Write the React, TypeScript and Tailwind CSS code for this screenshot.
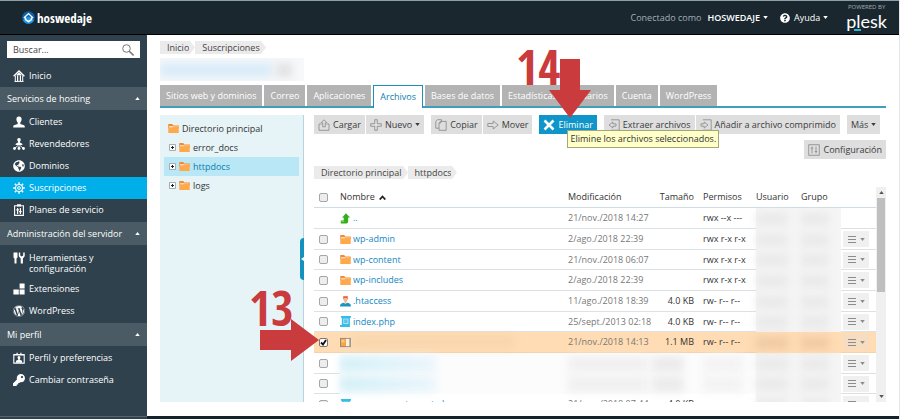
import type { ReactNode } from "react";
import { FaGlobeAmericas, FaKey, FaQuestionCircle, FaWordpress } from "react-icons/fa";

function Caret({ up = false }: { up?: boolean }) {
  return (
    <svg viewBox="0 0 6 4" className="h-[3px] w-[5px] shrink-0" fill="currentColor">
      <path d={up ? "M0 4 3 0l3 4z" : "M0 0h6L3 4z"} />
    </svg>
  );
}

function Icon({ children, className = "size-3" }: { children: ReactNode; className?: string }) {
  return (
    <svg viewBox="0 0 12 12" className={`${className} shrink-0`} fill="currentColor">
      {children}
    </svg>
  );
}

const line = { fill: "none", stroke: "currentColor" };

const bust =
  "M6 .5C4.2.5 3.3 1.8 3.4 3.5c.1 1.4.7 2.4 1.3 3v1.4L1 9.3c-.6.3-.8.8-.8 2.2h11.6c0-1.4-.2-1.9-.8-2.2L7.3 7.9V6.5c.6-.6 1.2-1.600 1.300-3C8.7 1.800 7.800.5 6 .5z";

function HomeIcon() {
  return (
    <Icon>
      <path {...line} strokeWidth="1.3" d="M.6 6.2 6 1l5.4 5.2" />
      <path {...line} d="M2.3 5.5v6M9.7 5.5v6M1.5 11.4h9" />
      <path d="M4 5.5h1.200V11H4zM6.800 5.500H8V11H6.800zM3 5.200 6 2.200l3 3z" />
    </Icon>
  );
}

function UserIcon() {
  return (
    <Icon>
      <path d={bust} />
    </Icon>
  );
}

function ResellerIcon() {
  return (
    <Icon>
      <path d="M6 0C4.800 0 4.200.9 4.300 2c0 .8.400 1.400.8 1.800v.8l-2 .9c-.4.2-.5.6-.5 1.500h6.800c0-.9-.1-1.300-.5-1.500l-2-.9v-.8c.4-.4.8-1 .8-1.800C7.800.9 7.200 0 6 0z" />
      <path {...line} strokeWidth=".9" d="M6 7v3M5 7.500 2 10M7 7.500 10 10" />
      <circle cx="1.5" cy="10.5" r="1.4" />
      <circle cx="6" cy="10.5" r="1.4" />
      <circle cx="10.5" cy="10.5" r="1.4" />
    </Icon>
  );
}

function GearIcon() {
  return (
    <Icon>
      <circle {...line} cx="6" cy="6" r="3.5" strokeWidth="1.1" />
      <circle {...line} cx="6" cy="6" r="1.4" />
      <path
        {...line}
        strokeWidth="1.5"
        d="M6 .2v2M6 9.8v2M.2 6h2M9.8 6h2M1.9 1.9l1.4 1.4M8.7 8.7l1.4 1.4M1.9 10.1l1.4-1.4M8.7 3.3l1.4-1.4"
      />
    </Icon>
  );
}

function PlanIcon() {
  return (
    <Icon>
      <path {...line} strokeWidth="1.1" d="M1.600 1.800h8.800v9.600H1.600z" />
      <path d="M4 .2h4v2.400H4zM4 4h1.200v6H4zM6.800 4H8v6H6.800zM3.300 5.200h2.600v1.200H3.300zM6.100 7h2.600v1.200H6.100z" />
    </Icon>
  );
}

function ToolsIcon() {
  return (
    <Icon>
      <path d="M.5.5h4v5l-1 1v5h-2v-5l-1-1z" />
      <path d="M5.800.5h1.400v3l1.500 1 1.500-1v-3h1.500v3.700L9.900 6.400v5.100H7.700V6.400L5.800 4.200z" />
    </Icon>
  );
}

function ExtensionsIcon() {
  return (
    <Icon>
      <path d="M6.600.6h5v5h-5zM.4 6.400h5.400v5H.4zM6.600 6.400h5v5h-5z" />
    </Icon>
  );
}

function BadgeIcon() {
  return (
    <Icon>
      <path {...line} strokeWidth="1.1" d="M.8 2.500h10.400v8.600H.8z" />
      <path d="M3.500.8h1.200v2H3.500zM7.300.8h1.200v2H7.300zM1 2.300h10v1.200H1z" />
      <path d="M6 4C5 4 4.500 4.800 4.600 5.700c0 .6.300 1 .6 1.300v.7L3 8.700v2h6v-2l-2.200-1V7c.3-.3.6-.7.6-1.300C7.500 4.800 7 4 6 4z" />
    </Icon>
  );
}

function FolderIcon() {
  return (
    <Icon className="h-[11px] w-[11px]">
      <path fill="#f58a2c" d="M.3 1h4.400l1 1.600h6v3H.3z" />
      <path fill="#fff" d="M1.300 3.600h9.600v2H1.300z" />
      <path fill="#ffa94d" d="M.3 4.600h4.500l1-1h5.900V11H.3z" />
    </Icon>
  );
}

function UpIcon() {
  return (
    <Icon className="h-[11px] w-[11px]">
      <path fill="#35b01b" d="M6.500.3 11 4.800H8.900v4.500c0 1.400-1 2.200-2.200 2.200H1l-.2-3.400H4V4.800H2.200z" />
      <path fill="#7ed957" d="M1.800 8.900h2.800v1H1.900z" />
    </Icon>
  );
}

function HtaccessIcon() {
  return (
    <Icon className="h-[11px] w-[11px]">
      <path fill="#e8623d" d="M3.500.2h5v3.500h-5z" />
      <path fill="#f7b48d" d="M4 2.200h4v3L6.900 6.500v1H5.100v-1L4 5.200z" />
      <path fill="#1d93c4" d="M0 11.500c0-2.600 1-3.600 4-4.200l2 1.200 2-1.200c3 .6 4 1.600 4 4.200z" />
    </Icon>
  );
}

function PhpIcon() {
  return (
    <Icon className="h-[11px] w-[11px]">
      <path fill="#35bce8" d="M1 0h11v2h-1.200v10H0V9.700h2V2H1z" />
      <path fill="#9fe3f7" d="M3.500 2.800h5.800v5.900H3.500z" />
      <path fill="#1fa0d0" d="M4.500 4h3.600v1H4.500zM4.500 6h3.600v1H4.500z" />
    </Icon>
  );
}

function ArchiveIcon() {
  return (
    <Icon className="h-[11px] w-[11px]">
      <path fill="#8c8a8c" d="M0 1h12v10H0z" />
      <path fill="#fff3e2" d="M6.500 2h3.700v8H6.500z" />
      <path fill="#f9a63c" d="M1 2h5.500v8H1z" />
      <path fill="#ffc477" d="M1.500 3h3.500v3H1.500z" />
    </Icon>
  );
}

function UploadIcon() {
  return (
    <Icon>
      <path {...line} strokeWidth=".8" d="M3.500 5H1v6.300h10V5H8.500M6 .8l3 3H7.300v4H4.700v-4H3z" />
    </Icon>
  );
}

function PlusIcon() {
  return (
    <Icon>
      <path {...line} strokeWidth=".8" d="M4.700.7h2.600v4h4v2.600h-4v4H4.700v-4h-4V4.700h4z" />
    </Icon>
  );
}

function CopyIcon() {
  return (
    <Icon>
      <path {...line} strokeWidth=".8" d="M4 9.200H.8V2.300L2.500.7h4v1.500M4 4l1.800-1.600h5.400v8.900H4zM5.800 2.400V4H4" />
    </Icon>
  );
}

function MoveIcon() {
  return (
    <Icon>
      <path {...line} strokeWidth=".8" d="M.8 4.500h5.400V2l5 4-5 4V7.500H.8z" />
    </Icon>
  );
}

function ExtractIcon() {
  return (
    <Icon>
      <path {...line} strokeWidth=".8" d="M3 .8h8.200v10.400H3M8 4.800H4.800V3L1 6l3.800 3V7.200H8z" />
    </Icon>
  );
}

function CompressIcon() {
  return (
    <Icon>
      <path {...line} strokeWidth=".8" d="M3 .8h8.200v10.400H3M1 4.800h3.200V3L8 6 4.200 9V7.200H1z" />
    </Icon>
  );
}

function SettingsIcon() {
  return (
    <Icon>
      <path {...line} strokeWidth=".8" d="M.7.7h10.600v10.600H.7zM4 2.500v7M8 2.500v7M2.800 4.200h2.400M6.800 7.500h2.400" />
    </Icon>
  );
}

const menu = [
  {
    title: "Servicios de hosting",
    items: [
      { label: "Clientes", icon: <UserIcon /> },
      { label: "Revendedores", icon: <ResellerIcon /> },
      { label: "Dominios", icon: <FaGlobeAmericas className="size-3 shrink-0" /> },
      { label: "Suscripciones", icon: <GearIcon />, active: true },
      { label: "Planes de servicio", icon: <PlanIcon /> },
    ],
  },
  {
    title: "Administración del servidor",
    items: [
      { label: "Herramientas y configuración", icon: <ToolsIcon />, tall: true },
      { label: "Extensiones", icon: <ExtensionsIcon /> },
      { label: "WordPress", icon: <FaWordpress className="size-3 shrink-0" /> },
    ],
  },
  {
    title: "Mi perfil",
    items: [
      { label: "Perfil y preferencias", icon: <BadgeIcon /> },
      { label: "Cambiar contraseña", icon: <FaKey className="size-3 shrink-0" /> },
    ],
  },
];

const tabs = [
  "Sitios web y dominios",
  "Correo",
  "Aplicaciones",
  "Archivos",
  "Bases de datos",
  "Estadísticas",
  "Usuarios",
  "Cuenta",
  "WordPress",
];

type Row = {
  name: string;
  icon: ReactNode;
  date: string;
  size?: string;
  perms: string;
  parent?: boolean;
  selected?: boolean;
  hidden?: boolean;
};

const rows: Row[] = [
  { name: "..", icon: <UpIcon />, date: "21/nov./2018 14:27", perms: "rwx --x ---", parent: true },
  { name: "wp-admin", icon: <FolderIcon />, date: "2/ago./2018 22:39", perms: "rwx r-x r-x" },
  { name: "wp-content", icon: <FolderIcon />, date: "21/nov./2018 06:07", perms: "rwx r-x r-x" },
  { name: "wp-includes", icon: <FolderIcon />, date: "2/ago./2018 22:39", perms: "rwx r-x r-x" },
  { name: ".htaccess", icon: <HtaccessIcon />, date: "11/ago./2018 18:39", size: "4.0 KB", perms: "rw- r-- r--" },
  { name: "index.php", icon: <PhpIcon />, date: "25/sept./2013 02:18", size: "4.0 KB", perms: "rw- r-- r--" },
  { name: "", icon: <ArchiveIcon />, date: "21/nov./2018 14:13", size: "1.1 MB", perms: "rw- r-- r--", selected: true },
  { name: "", icon: null, date: "", perms: "", hidden: true },
  { name: "", icon: null, date: "", perms: "", hidden: true },
  { name: "wp-comments-post.php", icon: <PhpIcon />, date: "21/nov./2018 07:44", size: "4.0 KB", perms: "rw- r-- r--" },
];

function Header() {
  return (
    <header className="flex h-[35px] shrink-0 items-center justify-between border-y border-t-[#8aa0a6] border-b-black bg-[#1a272f] pr-3 pl-[22px] text-white">
      <a href="#" className="flex items-center gap-0.5">
        <svg viewBox="0 0 14 14" className="size-[13px]">
          <circle cx="7" cy="7" r="6.8" fill="#0a62ad" />
          <path d="M1 10A6.800 6.800 0 0 0 13 10L7 6z" fill="#1f9be8" />
          <path d="M2 7.500 7 2.800l5 4.700M3.800 7v2.300L7 11.500l3.200-2.200V7" fill="none" stroke="#fff" strokeWidth="1.5" />
        </svg>
        <span className="font-['Open_Sans_Condensed','Open_Sans',sans-serif] text-[13px] leading-4 font-bold">
          hoswedaje
        </span>
      </a>
      <div className="flex items-center">
        <span className="mr-1.5 text-[#a3aeb4]">Conectado como</span>
        <button className="flex items-center gap-[3px] font-semibold">
          HOSWEDAJE <Caret />
        </button>
        <button className="ml-3 flex items-center gap-[3px]">
          <FaQuestionCircle className="mr-px size-2.5" /> Ayuda <Caret />
        </button>
        <a href="#" className="ml-[18px] flex flex-col items-center">
          <span className="text-[6px] leading-[7px] text-[#a3aeb4]">POWERED BY</span>
          <span className="flex font-['Lato',sans-serif] text-[18px] leading-5">
            p
            <span className="relative">
              l<i className="absolute -left-0.5 bottom-0 block h-0.5 w-[7px] bg-[#29b6d8]" />
            </span>
            esk
          </span>
        </a>
      </div>
    </header>
  );
}

function Sidebar() {
  return (
    <nav className="w-[147px] shrink-0 bg-[#2f414d] text-white">
      <label className="mx-[7px] mt-1.5 mb-[7px] flex h-[17px] items-center bg-white px-1.5">
        <input
          type="text"
          aria-label="Buscar"
          placeholder="Buscar..."
          className="w-0 flex-1 outline-none placeholder:text-[#444]"
        />
        <svg viewBox="0 0 12 12" className="size-3 text-[#777]" fill="none" stroke="currentColor">
          <circle cx="4.5" cy="4.5" r="3.8" />
          <path d="m7.3 7.3 4.3 4.2" strokeWidth="1.5" />
        </svg>
      </label>
      <a href="#" className="flex h-[22px] items-center gap-1 pl-[13px]">
        <HomeIcon /> Inicio
      </a>
      {menu.map((group) => (
        <section key={group.title}>
          <button className="flex h-[23px] w-full items-center justify-between bg-[#4a5b65] px-[7px]">
            {group.title} <Caret up />
          </button>
          <ul className="py-px">
            {group.items.map((item) => (
              <li key={item.label}>
                <a
                  href="#"
                  className={`flex gap-1 pl-[13px] ${item.tall ? "h-8 pt-1.5 pr-9 leading-[11px]" : "h-[22px] items-center"} ${item.active ? "bg-[#00aeea]" : ""}`}
                >
                  {item.icon} {item.label}
                </a>
              </li>
            ))}
          </ul>
        </section>
      ))}
    </nav>
  );
}

function Crumbs({ items }: { items: string[] }) {
  return (
    <div className="flex shrink-0">
      {items.map((item) => (
        <a key={item} href="#" className="flex h-[13px] items-center text-[#444]">
          <span className="flex h-full items-center bg-[#ebebeb] pl-[7px]">{item}</span>
          <svg viewBox="0 0 6 13" className="h-[13px] w-1.5 fill-[#ebebeb]">
            <path d="M0 0h1l5 6.500L1 13H0z" />
          </svg>
        </a>
      ))}
    </div>
  );
}

function Tool({ icon, label, caret = false, primary = false }: { icon?: ReactNode; label: string; caret?: boolean; primary?: boolean }) {
  return (
    <button
      className={`flex h-[19px] items-center gap-[3px] px-1 whitespace-nowrap ${primary ? "bg-[#1095ca] text-white" : "bg-[#dedede] text-[#3c3c3c]"}`}
    >
      {icon && <span className={primary ? "" : "text-[#888]"}>{icon}</span>}
      {label}
      {caret && <Caret />}
    </button>
  );
}

function Toolbar() {
  return (
    <div className="flex shrink-0 flex-wrap justify-end gap-y-[6px]">
      <div className="flex w-full gap-[7px]">
        <div className="flex gap-px">
          <Tool icon={<UploadIcon />} label="Cargar" />
          <Tool icon={<PlusIcon />} label="Nuevo" caret />
        </div>
        <div className="flex gap-px">
          <Tool icon={<CopyIcon />} label="Copiar" />
          <Tool icon={<MoveIcon />} label="Mover" />
        </div>
        <div className="relative">
          <Tool
            primary
            label="Eliminar"
            icon={
              <Icon>
                <path {...line} strokeWidth="2.5" d="m1.500 1.500 9 9M10.500 1.500l-9 9" />
              </Icon>
            }
          />
          <div
            role="tooltip"
            className="absolute top-[15px] left-7 z-10 flex h-[18px] items-center border border-[#a5a57c] bg-[#ffffc8] px-0.5 whitespace-nowrap text-[#333]"
          >
            Elimine los archivos seleccionados.
          </div>
        </div>
        <div className="flex gap-px">
          <Tool icon={<ExtractIcon />} label="Extraer archivos" />
          <Tool icon={<CompressIcon />} label="Añadir a archivo comprimido" />
        </div>
        <Tool label="Más" caret />
      </div>
      <Tool icon={<SettingsIcon />} label="Configuración" />
    </div>
  );
}

function Tree() {
  return (
    <div className="relative w-36 shrink-0 border-r border-[#b5d5de] bg-[#e6f3f7] px-1 pt-1">
      <div className="flex h-[19px] items-center gap-[3px] pl-1">
        <FolderIcon /> Directorio principal
      </div>
      {["error_docs", "httpdocs", "logs"].map((dir) => (
        <a
          key={dir}
          href="#"
          className={`flex h-[19px] items-center gap-[3px] pl-[5px] ${dir === "httpdocs" ? "bg-[#b9e7f5] text-[#0c7fae]" : ""}`}
        >
          <svg viewBox="0 0 7 7" className="size-[7px]">
            <path d="M.5.5h6v6h-6z" fill="#fff" stroke="#a3adb2" />
            <path d="M2 3.500h3M3.500 2v3" stroke="#222" />
          </svg>
          <FolderIcon /> {dir}
        </a>
      ))}
      <button
        aria-label="Ocultar árbol"
        className="absolute top-[123px] -right-px flex h-[42px] w-1 items-center justify-center rounded-l-sm bg-[#1591bd]"
      >
        <svg viewBox="0 0 3 4" className="h-1 w-[3px] fill-white">
          <path d="M3 0v4L0 2z" />
        </svg>
      </button>
    </div>
  );
}

function Smudge({ className }: { className: string }) {
  return <span className={`block blur-[4px] ${className}`} />;
}

function FileRow({ row }: { row: Row }) {
  const edge = row.selected ? "border-b border-[#f3d3ab]" : "border-b border-[#dbe1e4]";
  const cell = row.hidden ? "bg-[#fcfcfc]" : edge;
  const owner = row.selected ? "" : "bg-[#f5f5f5]";
  const smudge = row.selected ? "bg-[#f0c9a4]" : "bg-[#e9e9e9]";
  return (
    <tr className={`h-[21px] nth-[3n]:h-5 ${row.selected ? "bg-[#ffdcb3]" : ""}`}>
      <td className={`pl-[5px] ${edge}`}>
        {!row.parent && <Check label={row.name || "archivo"} checked={row.selected} />}
      </td>
      <td className={cell}>
        <span className="flex items-center gap-0.5">
          {row.icon}
          {row.hidden && <Smudge className="h-4 w-24 bg-linear-to-r from-[#d3f0f8] to-[#eaf6fc]" />}
          {row.selected && <Smudge className="h-2.5 w-40 bg-[#f7d4ad]" />}
          {row.name && (
            <a href="#" className="text-[#1388c4]">
              {row.name}
            </a>
          )}
        </span>
      </td>
      <td className={`text-[#777] ${cell}`}>{row.hidden ? <Smudge className="h-4 w-20 bg-[#f1f0f0]" /> : row.date}</td>
      <td className={`pr-[9px] text-right ${cell}`}>
        {row.hidden ? <Smudge className="h-4 w-8 bg-[#ebebeb]" /> : row.size}
      </td>
      <td className={cell}>{row.hidden ? <Smudge className="h-4 w-10 bg-[#f3f3f3]" /> : row.perms}</td>
      <td className={owner}>
        <Smudge className={`h-3 w-8 ${smudge}`} />
      </td>
      <td className={owner}>
        <Smudge className={`h-3 w-7 ${smudge}`} />
      </td>
      <td className={`pl-0.5 ${edge}`}>
        {!row.parent && (
          <button
            aria-label="Acciones"
            className={`flex h-4 w-[26px] items-center justify-center gap-1 text-[#8c8c8c] ${row.selected ? "bg-[#f6dcc0]" : "bg-[#f0f0f0]"}`}
          >
            <svg viewBox="0 0 8 7" className="h-[7px] w-2" stroke="currentColor">
              <path d="M0 .5h8M0 3.500h8M0 6.500h8" />
            </svg>
            <Caret />
          </button>
        )}
      </td>
    </tr>
  );
}

function Check({ label, checked = false }: { label: string; checked?: boolean }) {
  return (
    <span className="relative block size-[9px]">
      <input
        type="checkbox"
        aria-label={label}
        defaultChecked={checked}
        className="peer block size-[9px] appearance-none rounded-xs border border-[#a6a6a6] bg-[#ededed] checked:border-[#777] checked:bg-white"
      />
      <svg viewBox="0 0 9 9" className="pointer-events-none absolute inset-0 hidden peer-checked:block">
        <path d="m2 4.500 2 2 3-4.500" fill="none" stroke="#111" strokeWidth="1.8" />
      </svg>
    </span>
  );
}

function FileTable() {
  return (
    <div className="flex min-h-0 flex-1">
      <div className="min-w-0 flex-1 overflow-hidden">
        <table className="w-full table-fixed border-separate border-spacing-0 text-left whitespace-nowrap text-[#333]">
          <colgroup>
            <col className="w-[26px]" />
            <col />
            <col className="w-[84px]" />
            <col className="w-[51px]" />
            <col className="w-[53px]" />
            <col className="w-[45px]" />
            <col className="w-[40px]" />
            <col className="w-[35px]" />
          </colgroup>
          <thead>
            <tr className="h-[21px] *:border-b *:border-[#cfdde3] *:font-normal">
              <th className="pl-[5px]">
                <Check label="Seleccionar todo" />
              </th>
              <th>
                <span className="flex items-center gap-1">
                  Nombre
                  <svg viewBox="0 0 7 5" className="h-[5px] w-[7px]" fill="none" stroke="#222" strokeWidth="1.8">
                    <path d="m.7 4.500 2.800-3 2.800 3" />
                  </svg>
                </span>
              </th>
              <th>Modificación</th>
              <th className="pr-[9px] text-right">Tamaño</th>
              <th>Permisos</th>
              <th>Usuario</th>
              <th>Grupo</th>
              <th />
            </tr>
          </thead>
          <tbody>
            {rows.map((row, i) => (
              <FileRow key={i} row={row} />
            ))}
          </tbody>
        </table>
      </div>
      <div className="flex w-2.5 shrink-0 flex-col items-center bg-[#f0f0f0] py-1 text-[#555]">
        <Caret up />
        <div className="mt-1 h-[94px] w-2 bg-[#bfbfbf]" />
        <div className="mt-auto">
          <Caret />
        </div>
      </div>
    </div>
  );
}

function Notes() {
  return (
    <div className="pointer-events-none absolute inset-0 z-20 font-['Open_Sans_Condensed','Open_Sans',sans-serif] text-[48px] leading-[48px] font-bold text-[#c93b3d]">
      <span className="absolute top-[284px] left-[249px]">13</span>
      <svg viewBox="0 0 59 42" className="absolute top-[319px] left-[260px] h-[42px] w-[59px] fill-[#c93b3d]">
        <path d="M0 11h31V0l28 21-28 21V31H0z" />
      </svg>
      <span className="absolute top-[43px] left-[516px]">14</span>
      <svg viewBox="0 0 42 59" className="absolute top-[59px] left-[549px] h-[59px] w-[42px] fill-[#c93b3d]">
        <path d="M11 0v31H0l21 28 21-28H31V0z" />
      </svg>
    </div>
  );
}

export default function App() {
  return (
    <div className="relative flex h-screen flex-col border-r border-[#e4e7e8] bg-white font-['Open_Sans',sans-serif] text-[9px] leading-3 text-[#333]">
      <Header />
      <div className="flex min-h-0 flex-1">
        <Sidebar />
        <main className="flex min-w-0 flex-1 flex-col px-[13px] pt-1.5 pb-3.5">
          <Crumbs items={["Inicio", "Suscripciones"]} />
          <div className="mt-1 mb-1 flex h-[23px] w-36 shrink-0 items-center overflow-hidden bg-[#f6f8fa]">
            <Smudge className="h-3.5 w-28 bg-[#d9ebf8]" />
            <Smudge className="ml-1 h-3.5 w-4 bg-[#e2e2e2]" />
          </div>
          <div className="flex shrink-0 gap-0.5 border-b-2 border-[#3f9fbb]">
            {tabs.map((tab) => (
              <a
                key={tab}
                href="#"
                className={`flex items-center px-1.5 whitespace-nowrap ${tab === "Archivos" ? "-mb-0.5 h-[23px] border border-b-0 border-[#1c8fb5] bg-white text-[#0c7fae]" : "h-[21px] bg-[#b3b3b3] text-white"}`}
              >
                {tab}
              </a>
            ))}
          </div>
          <div className="mt-[7px] flex min-h-0 flex-1">
            <Tree />
            <div className="flex min-w-0 flex-1 flex-col pl-2.5">
              <Toolbar />
              <div className="mt-[7px] mb-2">
                <Crumbs items={["Directorio principal", "httpdocs"]} />
              </div>
              <FileTable />
            </div>
          </div>
        </main>
      </div>
      <footer className="flex h-[3px] shrink-0 bg-[#13232c]">
        <div className="w-[147px] border-t border-[#566770] bg-[#2f414d]" />
      </footer>
      <Notes />
    </div>
  );
}
